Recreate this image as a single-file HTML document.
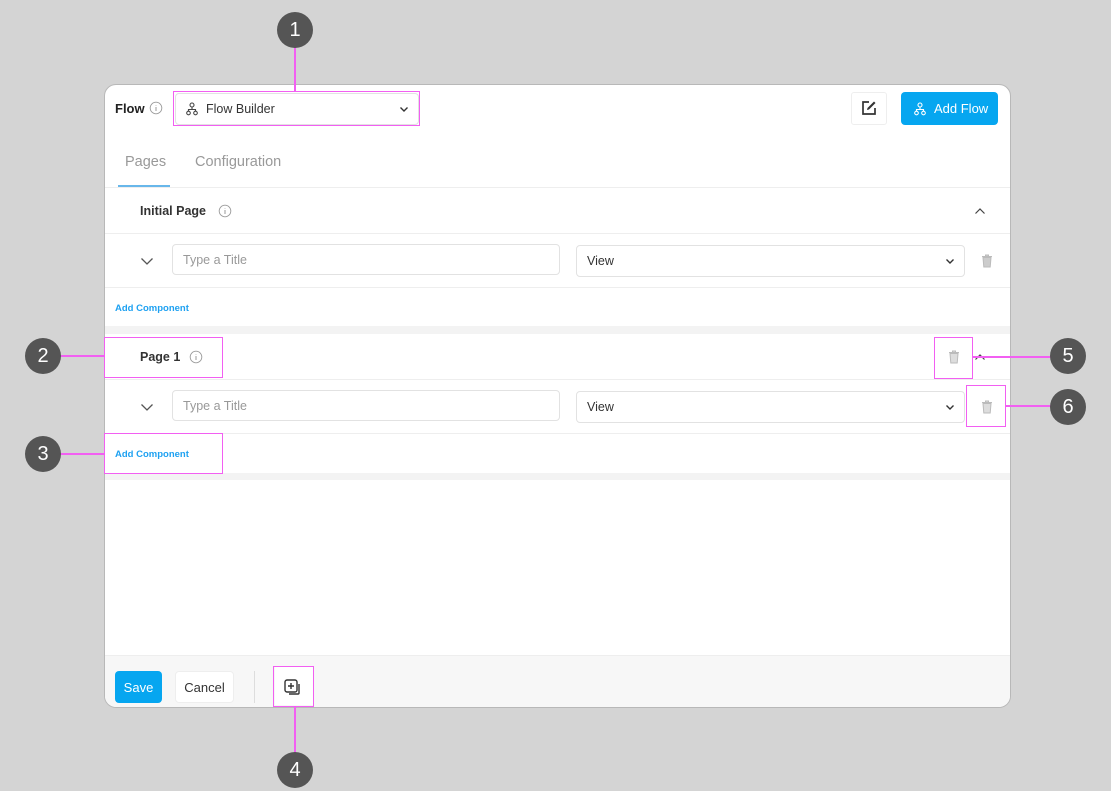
<!DOCTYPE html>
<html><head><meta charset="utf-8"><style>
*{box-sizing:border-box;margin:0;padding:0}
body{width:1111px;height:791px;background:#d4d4d4;position:relative;overflow:hidden;font-family:"Liberation Sans",sans-serif;color:#333}
.a{position:absolute}
.panel{left:104px;top:84px;width:907px;height:624px;background:#fff;border:1px solid #b8b8b8;border-radius:12px;overflow:hidden}
.hl{background:#eee;height:1px}
.inp{border:1px solid #e2e2e2;border-radius:4px;background:#fff;font-size:12.5px;color:#999;padding-left:10px;display:flex;align-items:center}
.mag{border:1.5px solid #f25ff2}
.mline{background:#f25ff2}
.circ{width:36px;height:36px;border-radius:50%;background:#555;color:#fff;font-size:20px;display:flex;align-items:center;justify-content:center}
.ac{font-size:9.5px;font-weight:bold;color:#1ea1f1}
.t13{font-size:13px}
</style></head><body>
<div class="a panel">
  <div class="a t13" style="left:10px;top:16px;font-weight:bold;color:#222">Flow</div>
  <svg class="a" style="left:44px;top:16px" width="14" height="14" viewBox="0 0 14 14"><circle cx="7" cy="7" r="5.8" fill="none" stroke="#999" stroke-width="0.9"/><path d="M7 6v4M7 4v.5" stroke="#999" stroke-width="1"/></svg>
  <div class="a inp" style="left:70px;top:8px;width:244px;height:32px;color:#333">
    <svg width="12" height="14" viewBox="0 0 12 14" style="margin-right:8px"><circle cx="6" cy="3" r="2" fill="none" stroke="#444" stroke-width="1.1"/><circle cx="2.5" cy="11" r="1.8" fill="none" stroke="#444" stroke-width="1.1"/><circle cx="9.5" cy="11" r="1.8" fill="none" stroke="#444" stroke-width="1.1"/><path d="M6 5v2.5M2.5 9V7.5h7V9" fill="none" stroke="#444" stroke-width="1.1"/></svg>Flow Builder
    <svg class="a" style="right:9px;top:12px" width="10" height="7" viewBox="0 0 10 7"><path d="M1.5 1.5l3.5 3.5 3.5-3.5" fill="none" stroke="#333" stroke-width="1.4"/></svg>
  </div>
  <div class="a" style="left:746px;top:7px;width:36px;height:33px;border:1px solid #eee;border-radius:3px"></div>
  <svg class="a" style="left:756px;top:15px" width="16" height="16" viewBox="0 0 16 16"><path d="M8 2H2v12h12V8" fill="none" stroke="#333" stroke-width="1.7"/><path d="M13 1.5l1.5 1.5-6.5 6.5-2 .5.5-2z" fill="#333"/></svg>
  <div class="a" style="left:796px;top:7px;width:97px;height:33px;background:#06a6f0;border-radius:4px;color:#fff;font-size:13px;display:flex;align-items:center;padding-left:13px">
    <svg width="12" height="14" viewBox="0 0 12 14" style="margin-right:8px"><circle cx="6" cy="3" r="2" fill="none" stroke="#fff" stroke-width="1.1"/><circle cx="2.5" cy="11" r="1.8" fill="none" stroke="#fff" stroke-width="1.1"/><circle cx="9.5" cy="11" r="1.8" fill="none" stroke="#fff" stroke-width="1.1"/><path d="M6 5v2.5M2.5 9V7.5h7V9" fill="none" stroke="#fff" stroke-width="1.1"/></svg>Add Flow</div>
  <div class="a" style="left:20px;top:69px;font-size:14.5px;color:#999">Pages</div>
  <div class="a" style="left:90px;top:69px;font-size:14.5px;color:#999">Configuration</div>
  <div class="a" style="left:13px;top:100px;width:52px;height:2px;background:#68b7ea"></div>
  <div class="a hl" style="left:0;top:102px;width:907px"></div>
  <div class="a" style="left:35px;top:119px;font-size:12.5px;font-weight:bold;color:#333">Initial Page</div>
  <svg class="a" style="left:113px;top:119px" width="14" height="14" viewBox="0 0 14 14"><circle cx="7" cy="7" r="5.8" fill="none" stroke="#999" stroke-width="0.9"/><path d="M7 6v4M7 4v.5" stroke="#999" stroke-width="1"/></svg>
  <svg class="a" style="left:869px;top:122px" width="12" height="8" viewBox="0 0 12 8"><path d="M1.5 6.5l4.5-4.5 4.5 4.5" fill="none" stroke="#444" stroke-width="1.2"/></svg>
  <div class="a hl" style="left:0;top:148px;width:907px"></div>
  <svg class="a" style="left:35px;top:172px" width="14" height="9" viewBox="0 0 14 9"><path d="M1.5 1.5l5.5 5.5 5.5-5.5" fill="none" stroke="#555" stroke-width="1.3"/></svg>
  <div class="a inp" style="left:67px;top:159px;width:388px;height:31px">Type a Title</div>
  <div class="a inp" style="left:471px;top:160px;width:389px;height:32px;color:#333">View
    <svg class="a" style="right:9px;top:12px" width="10" height="7" viewBox="0 0 10 7"><path d="M1.5 1.5l3.5 3.5 3.5-3.5" fill="none" stroke="#333" stroke-width="1.4"/></svg></div>
  <svg class="a" style="left:876px;top:169px" width="12" height="14" viewBox="0 0 12 14"><path d="M1 2.5h10M4.5 2.5V1h3v1.5M2 3.5l.8 9.5h6.4l.8-9.5z" fill="#ccc" stroke="#bbb" stroke-width="1"/></svg>
  <div class="a hl" style="left:0;top:202px;width:907px"></div>
  <div class="a ac" style="left:10px;top:218px">Add Component</div>
  <div class="a" style="left:0;top:241px;width:907px;height:8px;background:#f3f3f3"></div>
  <div class="a" style="left:35px;top:265px;font-size:12.5px;font-weight:bold;color:#333">Page 1</div>
  <svg class="a" style="left:84px;top:265px" width="14" height="14" viewBox="0 0 14 14"><circle cx="7" cy="7" r="5.8" fill="none" stroke="#999" stroke-width="0.9"/><path d="M7 6v4M7 4v.5" stroke="#999" stroke-width="1"/></svg>
  <svg class="a" style="left:843px;top:265px" width="12" height="14" viewBox="0 0 12 14"><path d="M1 2.5h10M4.5 2.5V1h3v1.5M2 3.5l.8 9.5h6.4l.8-9.5z" fill="#ddd" stroke="#bbb" stroke-width="1"/></svg>
  <svg class="a" style="left:869px;top:268px" width="12" height="8" viewBox="0 0 12 8"><path d="M1.5 6.5l4.5-4.5 4.5 4.5" fill="none" stroke="#444" stroke-width="1.2"/></svg>
  <div class="a hl" style="left:0;top:294px;width:907px"></div>
  <svg class="a" style="left:35px;top:318px" width="14" height="9" viewBox="0 0 14 9"><path d="M1.5 1.5l5.5 5.5 5.5-5.5" fill="none" stroke="#555" stroke-width="1.3"/></svg>
  <div class="a inp" style="left:67px;top:305px;width:388px;height:31px">Type a Title</div>
  <div class="a inp" style="left:471px;top:306px;width:389px;height:32px;color:#333">View
    <svg class="a" style="right:9px;top:12px" width="10" height="7" viewBox="0 0 10 7"><path d="M1.5 1.5l3.5 3.5 3.5-3.5" fill="none" stroke="#333" stroke-width="1.4"/></svg></div>
  <svg class="a" style="left:876px;top:315px" width="12" height="14" viewBox="0 0 12 14"><path d="M1 2.5h10M4.5 2.5V1h3v1.5M2 3.5l.8 9.5h6.4l.8-9.5z" fill="#ddd" stroke="#bbb" stroke-width="1"/></svg>
  <div class="a hl" style="left:0;top:348px;width:907px"></div>
  <div class="a ac" style="left:10px;top:364px">Add Component</div>
  <div class="a" style="left:0;top:388px;width:907px;height:7px;background:#f3f3f3"></div>
  <div class="a" style="left:0;top:570px;width:907px;height:54px;background:#f7f7f7;border-top:1px solid #eee"></div>
  <div class="a" style="left:10px;top:586px;width:47px;height:32px;background:#06a6f0;border-radius:4px;color:#fff;font-size:13px;display:flex;align-items:center;justify-content:center">Save</div>
  <div class="a" style="left:70px;top:586px;width:59px;height:32px;background:#fff;border:1px solid #eee;border-radius:4px;color:#333;font-size:13px;display:flex;align-items:center;justify-content:center">Cancel</div>
  <div class="a" style="left:149px;top:586px;width:1px;height:32px;background:#ddd"></div>
  <div class="a" style="left:170px;top:582px;width:38px;height:38px;background:#fff"></div>
  <svg class="a" style="left:179px;top:594px" width="18" height="18" viewBox="0 0 18 18"><rect x="1" y="1" width="12" height="12" rx="2" fill="none" stroke="#333" stroke-width="1.4"/><path d="M7 4v6M4 7h6" stroke="#333" stroke-width="1.4"/><path d="M15 5v9a1 1 0 0 1-1 1H5" fill="none" stroke="#333" stroke-width="1.4"/></svg>
</div>
<div class="a mag" style="left:173px;top:91px;width:247px;height:35px"></div>
<div class="a mline" style="left:294px;top:46px;width:2px;height:45px"></div>
<div class="a circ" style="left:277px;top:12px">1</div>
<div class="a mag" style="left:104px;top:337px;width:119px;height:41px"></div>
<div class="a mline" style="left:60px;top:355px;width:44px;height:2px"></div>
<div class="a circ" style="left:25px;top:338px">2</div>
<div class="a mag" style="left:104px;top:433px;width:119px;height:41px"></div>
<div class="a mline" style="left:60px;top:453px;width:44px;height:2px"></div>
<div class="a circ" style="left:25px;top:436px">3</div>
<div class="a mag" style="left:273px;top:666px;width:41px;height:41px"></div>
<div class="a mline" style="left:294px;top:707px;width:2px;height:46px"></div>
<div class="a circ" style="left:277px;top:752px">4</div>
<div class="a mag" style="left:934px;top:337px;width:39px;height:42px"></div>
<div class="a mline" style="left:973px;top:356px;width:78px;height:2px"></div>
<div class="a circ" style="left:1050px;top:338px">5</div>
<div class="a mag" style="left:966px;top:385px;width:40px;height:42px"></div>
<div class="a mline" style="left:1006px;top:405px;width:45px;height:2px"></div>
<div class="a circ" style="left:1050px;top:389px">6</div>
</body></html>
